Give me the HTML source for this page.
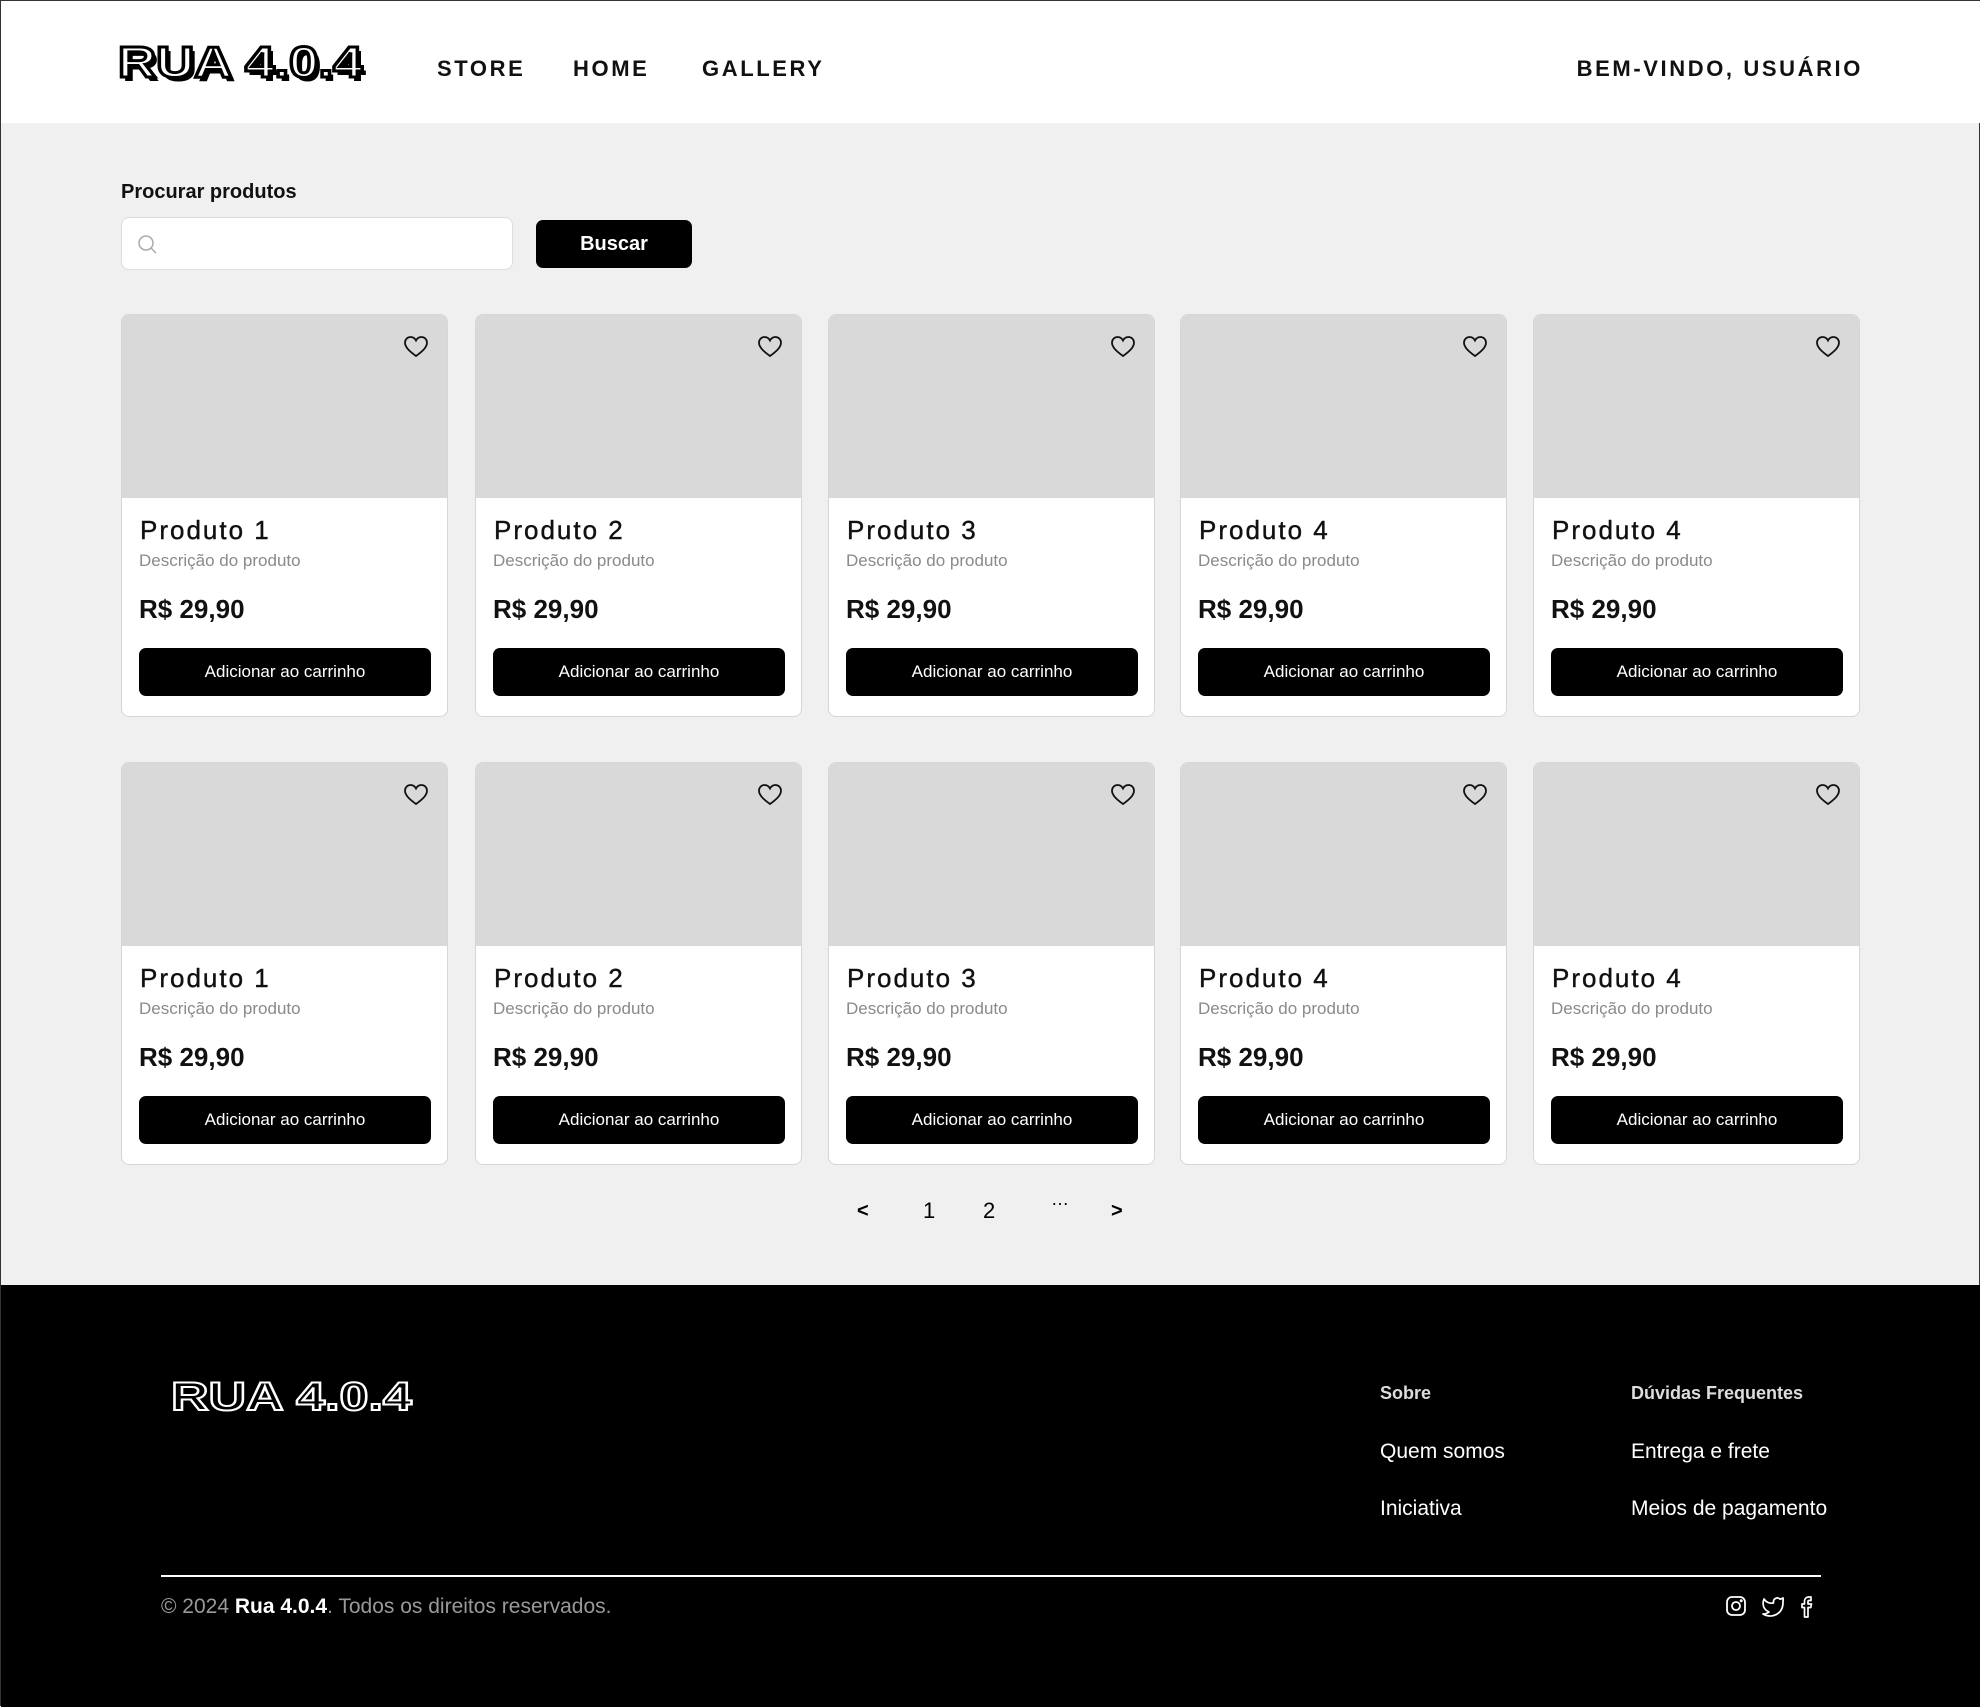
<!DOCTYPE html>
<html><head><meta charset="utf-8"><style>
*{margin:0;padding:0;box-sizing:border-box}
body{width:1980px;height:1706px;background:#f0f0f0;font-family:"Liberation Sans",sans-serif;position:relative;overflow:hidden;border:1px solid #333}
.abs{position:absolute}
header{position:absolute;left:0;top:0;width:1980px;height:122px;background:#fff}
.logo{position:absolute;font-family:"Liberation Sans",sans-serif;font-weight:bold;line-height:1;white-space:nowrap;transform-origin:0 0}
.nav{position:absolute;top:55px;font-weight:bold;font-size:22px;letter-spacing:2.6px;color:#111}
.card{position:absolute;width:327px;height:403px;background:#fff;border:1px solid #d6d6d6;border-radius:8px;overflow:hidden}
.card .img{height:183px;background:#d9d9d9;position:relative}
.card .heart{position:absolute;right:18px;top:20px}
.card .t{position:absolute;left:18px;top:200px;font-size:26px;letter-spacing:2px;color:#111;-webkit-text-stroke:0.4px #111}
.card .d{position:absolute;left:17px;top:236px;font-size:17px;color:#8a8a8a}
.card .p{position:absolute;left:17px;top:279px;font-size:26px;font-weight:bold;color:#111}
.card .b{position:absolute;left:17px;top:333px;width:292px;height:48px;background:#000;color:#fff;border-radius:7px;font-size:17px;text-align:center;line-height:48px}
footer{position:absolute;left:0;top:1284px;width:1980px;height:422px;background:#000;color:#fff}
.fl{position:absolute;font-size:21px;color:#fff}
</style></head><body>
<header>
<div class="logo" style="left:117px;top:40px;font-size:44px;color:#fff;-webkit-text-stroke:3px #000;text-shadow:3px 4px 0 #000;transform:scaleX(1.2)">RUA 4.0.4</div>
<div class="nav" style="left:436px">STORE</div>
<div class="nav" style="left:572px">HOME</div>
<div class="nav" style="left:701px">GALLERY</div>
<div class="nav" style="right:118px">BEM-VINDO, USUÁRIO</div>
</header>
<div class="abs" style="left:120px;top:180px;font-size:20px;font-weight:bold;color:#111">Procurar produtos</div>
<div class="abs" style="left:120px;top:216px;width:392px;height:53px;background:#fff;border:1px solid #ddd;border-radius:8px">
<svg class="abs" style="left:14px;top:15px" width="24" height="24" viewBox="0 0 24 24" fill="none" stroke="#aaa" stroke-width="1.5"><circle cx="10" cy="10" r="7"/><path d="M15 15l5 5"/></svg></div>
<div class="abs" style="left:535px;top:219px;width:156px;height:48px;background:#000;border-radius:7px;color:#fff;font-size:20px;font-weight:bold;text-align:center;line-height:48px">Buscar</div>

<div id="cards"></div>
<script>
var xs=[120,474,827,1179,1532],ys=[313,761],names=["Produto 1","Produto 2","Produto 3","Produto 4","Produto 4"],h='';
ys.forEach(function(y){xs.forEach(function(x,i){h+='<div class="card" style="left:'+x+'px;top:'+y+'px"><div class="img"><svg class="heart" width="26" height="24" viewBox="0 0 26 24" fill="none" stroke="#111" stroke-width="1.8"><path d="M13 21C6 16 2 12 2 7.5 2 4.5 4.5 2 7.5 2 10 2 12 3.5 13 5.5 14 3.5 16 2 18.5 2 21.5 2 24 4.5 24 7.5 24 12 20 16 13 21Z"/></svg></div><div class="t">'+names[i]+'</div><div class="d">Descrição do produto</div><div class="p">R$ 29,90</div><div class="b">Adicionar ao carrinho</div></div>';});});
document.getElementById('cards').innerHTML=h;
</script>

<div class="abs" style="left:856px;top:1199px;font-size:20px;font-weight:bold">&lt;</div>
<div class="abs" style="left:922px;top:1197px;font-size:22px">1</div>
<div class="abs" style="left:982px;top:1197px;font-size:22px;letter-spacing:1px">2</div>
<div class="abs" style="left:1050px;top:1188px;font-size:18px">…</div>
<div class="abs" style="left:1110px;top:1199px;font-size:20px;font-weight:bold">&gt;</div>

<footer>
<div class="logo" style="left:170px;top:92px;font-size:40px;color:#000;-webkit-text-stroke:2px #fff;transform:scaleX(1.3)">RUA 4.0.4</div>
<div class="fl" style="left:1379px;top:98px;font-size:18px;font-weight:bold;color:#ddd">Sobre</div>
<div class="fl" style="left:1630px;top:98px;font-size:18px;font-weight:bold;color:#ddd">Dúvidas Frequentes</div>
<div class="fl" style="left:1379px;top:155px">Quem somos</div>
<div class="fl" style="left:1630px;top:155px">Entrega e frete</div>
<div class="fl" style="left:1379px;top:212px">Iniciativa</div>
<div class="fl" style="left:1630px;top:212px">Meios de pagamento</div>
<div class="abs" style="left:160px;top:290px;width:1660px;height:2px;background:#fff"></div>
<div class="fl" style="left:160px;top:310px;color:#999">© 2024 <b style="color:#fff">Rua 4.0.4</b>. Todos os direitos reservados.</div>
<svg class="abs" style="left:1724px;top:310px" width="22" height="22" viewBox="0 0 22 22" fill="none" stroke="#fff" stroke-width="1.8"><rect x="2" y="2" width="18" height="18" rx="5"/><circle cx="11" cy="11" r="4"/><circle cx="16.2" cy="5.8" r=".6" fill="#fff"/></svg>
<svg class="abs" style="left:1760px;top:310px" width="24" height="22" viewBox="0 0 24 22" fill="none" stroke="#fff" stroke-width="1.7" stroke-linejoin="round"><path d="M22 3c-1 .6-2 1-3 1.1A3.8 3.8 0 0 0 12.5 7v1A9 9 0 0 1 3 4s-4 9 5 13a10 10 0 0 1-6 2c9 5 20 0 20-11.5 0-.3 0-.6-.1-.8A7 7 0 0 0 22 3z"/></svg>
<svg class="abs" style="left:1798px;top:310px" width="16" height="24" viewBox="0 0 16 24" fill="none" stroke="#fff" stroke-width="1.7" stroke-linejoin="round"><path d="M12 2H9.5A4 4 0 0 0 5.5 6v3H3v3.5h2.5V22H9V12.5h2.8l.7-3.5H9V6.5a1 1 0 0 1 1-1h2z"/></svg>
</footer>
</body></html>
